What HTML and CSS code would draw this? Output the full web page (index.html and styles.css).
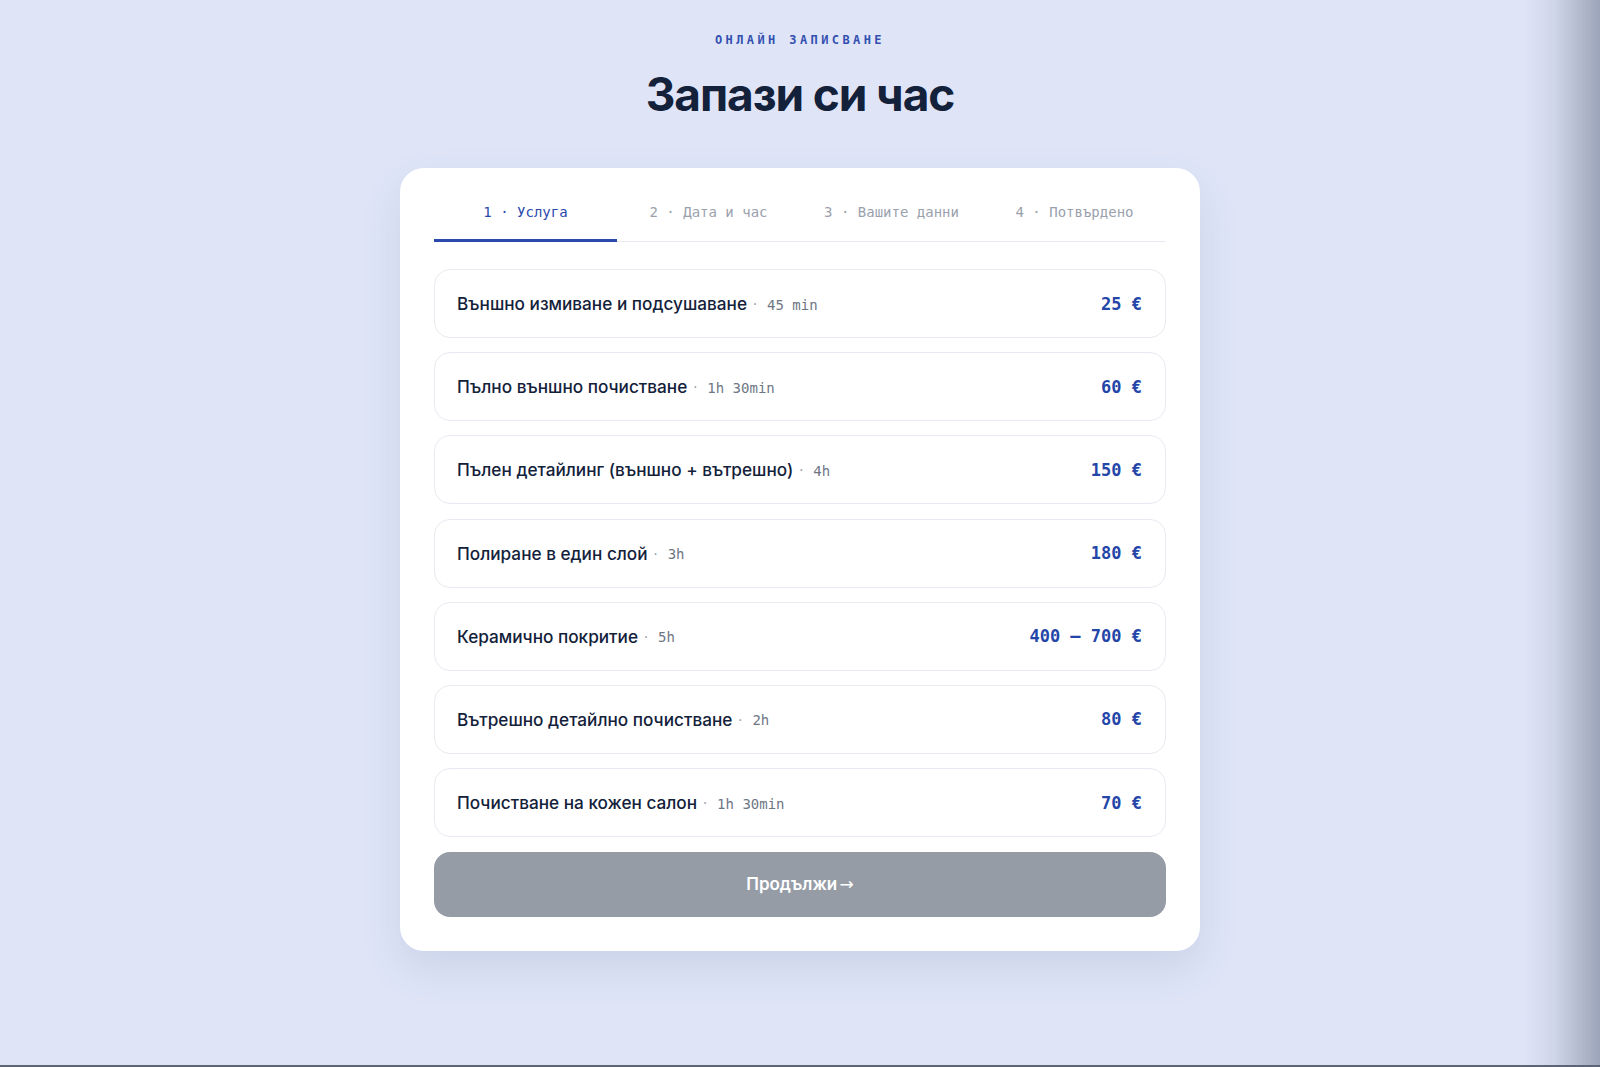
FILE: index.html
```html
<!DOCTYPE html>
<html lang="bg">
<head>
<meta charset="utf-8">
<title>Запази си час</title>
<link rel="stylesheet" href="styles.css">
</head>
<body>
<main class="page">
  <header class="hero">
    <div class="eyebrow">ОНЛАЙН ЗАПИСВАНЕ</div>
    <h1 class="title">Запази си час</h1>
  </header>
  <section class="card">
    <nav class="tabs">
      <div class="tab active">1 · Услуга</div>
      <div class="tab">2 · Дата и час</div>
      <div class="tab">3 · Вашите данни</div>
      <div class="tab">4 · Потвърдено</div>
    </nav>
    <ul class="services">
      <li class="service"><span class="name">Външно измиване и подсушаване</span><span class="sep">·</span><span class="dur">45 min</span><span class="price">25 €</span></li>
      <li class="service"><span class="name">Пълно външно почистване</span><span class="sep">·</span><span class="dur">1h 30min</span><span class="price">60 €</span></li>
      <li class="service"><span class="name">Пълен детайлинг (външно + вътрешно)</span><span class="sep">·</span><span class="dur">4h</span><span class="price">150 €</span></li>
      <li class="service"><span class="name">Полиране в един слой</span><span class="sep">·</span><span class="dur">3h</span><span class="price">180 €</span></li>
      <li class="service"><span class="name">Керамично покритие</span><span class="sep">·</span><span class="dur">5h</span><span class="price">400 – 700 €</span></li>
      <li class="service"><span class="name">Вътрешно детайлно почистване</span><span class="sep">·</span><span class="dur">2h</span><span class="price">80 €</span></li>
      <li class="service"><span class="name">Почистване на кожен салон</span><span class="sep">·</span><span class="dur">1h 30min</span><span class="price">70 €</span></li>
    </ul>
    <button class="next" type="button">Продължи <span class="arrow">→</span></button>
  </section>
</main>
<div class="edge"></div>
</body>
</html>
```
FILE: styles.css
```css
* { box-sizing: border-box; }
html, body { margin: 0; padding: 0; }
body {
  background: #dfe5f7;
  font-family: Inter, "Noto Sans", sans-serif;
  color: #13213a;
  min-height: 1067px;
  border-bottom: 2px solid #5d6575;
}
.page {
  display: flex;
  flex-direction: column;
  align-items: center;
  padding-top: 32px;
}
.hero { text-align: center; }
.eyebrow {
  font-family: "DejaVu Sans Mono", monospace;
  font-size: 12px;
  font-weight: 700;
  letter-spacing: 3.4px;
  color: #3350b0;
  line-height: 16px;
}
.title {
  margin: 20px 0 0;
  font-size: 46px;
  font-weight: 700;
  letter-spacing: -1.1px;
  line-height: 52px;
  color: #13213a;
}
.card {
  margin-top: 48px;
  width: 800px;
  background: #fff;
  border-radius: 24px;
  padding: 24px 34px 34px;
  box-shadow: 0 18px 40px rgba(60, 80, 140, 0.12);
}
.tabs {
  display: grid;
  grid-template-columns: repeat(4, 1fr);
  border-bottom: 1px solid #e6e9ef;
}
.tab {
  text-align: center;
  font-family: "DejaVu Sans Mono", monospace;
  font-size: 14px;
  color: #9aa1ad;
  padding: 12px 0 19px;
  margin-bottom: -1px;
  border-bottom: 3px solid transparent;
}
.tab.active {
  color: #2a49ad;
  border-bottom-color: #2a49ad;
}
.services {
  list-style: none;
  margin: 27px 0 0;
  padding: 0;
  display: flex;
  flex-direction: column;
  gap: 14.2px;
}
.service {
  display: flex;
  align-items: center;
  height: 69px;
  padding: 0 23px 0 22px;
  border: 1px solid #e7eaf0;
  border-radius: 16px;
}
.name {
  font-size: 17.2px;
  font-weight: 500;
  color: #13213a;
}
.sep {
  margin: 0 10px 0 6px;
  color: #8b93a0;
  font-size: 14px;
}
.dur {
  font-family: "DejaVu Sans Mono", monospace;
  font-size: 14px;
  color: #6e7684;
  padding-top: 2px;
}
.price {
  margin-left: auto;
  font-family: "DejaVu Sans Mono", monospace;
  font-size: 17px;
  font-weight: 700;
  color: #2446a8;
}
.next {
  margin-top: 14.5px;
  width: 100%;
  height: 65px;
  border: 0;
  border-radius: 16px;
  background: #959ca6;
  color: #fff;
  font-family: Inter, "Noto Sans", sans-serif;
  font-size: 17px;
  font-weight: 600;
}
.arrow {
  font-family: "DejaVu Sans", sans-serif;
  font-weight: 400;
  margin-left: -2px;
}
.edge {
  position: fixed;
  top: 0;
  right: 0;
  width: 75px;
  height: 100%;
  background: linear-gradient(to right, rgba(90, 100, 125, 0) 0%, rgba(90, 100, 125, 0.12) 40%, rgba(90, 100, 125, 0.5) 100%);
  pointer-events: none;
}
```
